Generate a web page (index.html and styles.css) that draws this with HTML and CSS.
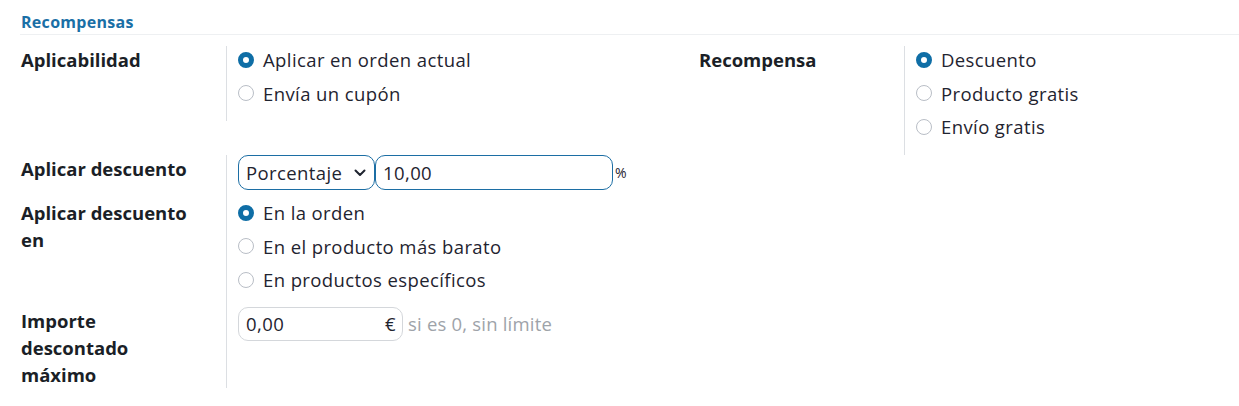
FILE: index.html
```html
<!DOCTYPE html>
<html lang="es">
<head>
<meta charset="utf-8">
<title>Recompensas</title>
<link rel="stylesheet" href="styles.css">
</head>
<body>
<div class="sheet">
  <div class="section-title">Recompensas</div>

  <div class="top-grid">
    <div class="group">
      <div class="label">Aplicabilidad</div>
      <div class="value">
        <label class="radio"><span class="dot checked"></span><span>Aplicar en orden actual</span></label>
        <label class="radio"><span class="dot"></span><span>Envía un cupón</span></label>
      </div>
    </div>
    <div class="group">
      <div class="label">Recompensa</div>
      <div class="value">
        <label class="radio"><span class="dot checked"></span><span>Descuento</span></label>
        <label class="radio"><span class="dot"></span><span>Producto gratis</span></label>
        <label class="radio"><span class="dot"></span><span>Envío gratis</span></label>
      </div>
    </div>
  </div>

  <div class="group single">
    <div class="label">Aplicar descuento</div>
    <div class="value inline">
      <div class="select">
        <span>Porcentaje</span>
        <svg class="chev" width="12" height="8" viewBox="0 0 12 8"><path d="M1.5 1.5 L6 6 L10.5 1.5" fill="none" stroke="#1f2430" stroke-width="2" stroke-linecap="round" stroke-linejoin="round"/></svg>
      </div>
      <input class="field blue pct" type="text" value="10,00">
      <span class="unit">%</span>
    </div>

    <div class="label">Aplicar descuento en</div>
    <div class="value">
      <label class="radio"><span class="dot checked"></span><span>En la orden</span></label>
      <label class="radio"><span class="dot"></span><span>En el producto más barato</span></label>
      <label class="radio"><span class="dot"></span><span>En productos específicos</span></label>
    </div>

    <div class="label">Importe descontado máximo</div>
    <div class="value inline top">
      <div class="money">
        <span>0,00</span>
        <span class="cur">€</span>
      </div>
      <span class="hint">si es 0, sin límite</span>
    </div>
  </div>
</div>
</body>
</html>
```

FILE: styles.css
```css
* { box-sizing: border-box; }

body {
  margin: 0;
  background: #ffffff;
  font-family: "Open Sans", "Noto Sans", sans-serif;
  font-size: 18.5px;
  letter-spacing: 0.4px;
  color: #1f2430;
}

.sheet {
  padding: 12px 0 0 20px;
}

.section-title {
  font-size: 16px;
  font-weight: 700;
  letter-spacing: 0.3px;
  color: #1a6fa6;
  line-height: 20px;
  padding: 0 0 2px 1px;
  border-bottom: 1px solid #eef0f2;
}

.top-grid {
  display: grid;
  grid-template-columns: 678px 1fr;
  align-items: start;
  margin-top: 11px;
}

.group {
  display: grid;
  grid-template-columns: 206px 1fr;
  align-items: start;
}

.group.single {
  width: 679px;
}

.label {
  font-weight: 700;
  letter-spacing: 0;
  line-height: 27px;
  padding: 0 29px 0 1px;
  color: #1b1f27;
}

.value {
  border-left: 1px solid #dcdfe3;
  padding: 0 0 13.5px 11px;
  align-self: stretch;
}

.top-grid .value {
  align-self: start;
  padding-top: 1px;
  padding-bottom: 14.5px;
}
.top-grid .label { padding-top: 0; }

.radio {
  display: flex;
  align-items: center;
  gap: 9px;
  height: 27px;
  margin-bottom: 6.5px;
  line-height: 27px;
}
.radio:last-child { margin-bottom: 0; }
.top-grid .radio { margin-top: -1px; margin-bottom: 7.5px; }
.top-grid .radio:last-child { margin-bottom: 0; }

.dot {
  width: 16px;
  height: 16px;
  border-radius: 50%;
  border: 1px solid #b9bec6;
  background: #fff;
  flex: none;
}
.dot.checked {
  border: 5px solid #0f6ea6;
  background: #fff;
}

.inline {
  display: flex;
  align-items: center;
  padding-bottom: 9.5px;
}
.inline.top { padding-bottom: 46px; align-items: flex-start; }

.select {
  width: 137px;
  height: 35px;
  border: 1px solid #1c6ea4;
  border-radius: 10px;
  display: flex;
  align-items: center;
  justify-content: space-between;
  padding: 0 8px 0 7px;
}
.chev { margin-top: 1px; }

.field {
  font: inherit;
  letter-spacing: inherit;
  color: inherit;
  height: 35px;
  border-radius: 10px;
  outline: none;
  padding: 0 7px;
  background: #fff;
}
.field.blue {
  border: 1px solid #1c6ea4;
}
.pct { width: 238px; }

.unit {
  font-size: 14px;
  margin-left: 2px;
}

.money {
  width: 165px;
  height: 34px;
  border: 1px solid #d4d7db;
  border-radius: 10px;
  display: flex;
  align-items: center;
  justify-content: space-between;
  padding: 0 6px 0 7px;
}

.hint {
  color: #9ea3a9;
  margin-left: 5px;
  line-height: 34px;
  letter-spacing: 0.2px;
}
```
